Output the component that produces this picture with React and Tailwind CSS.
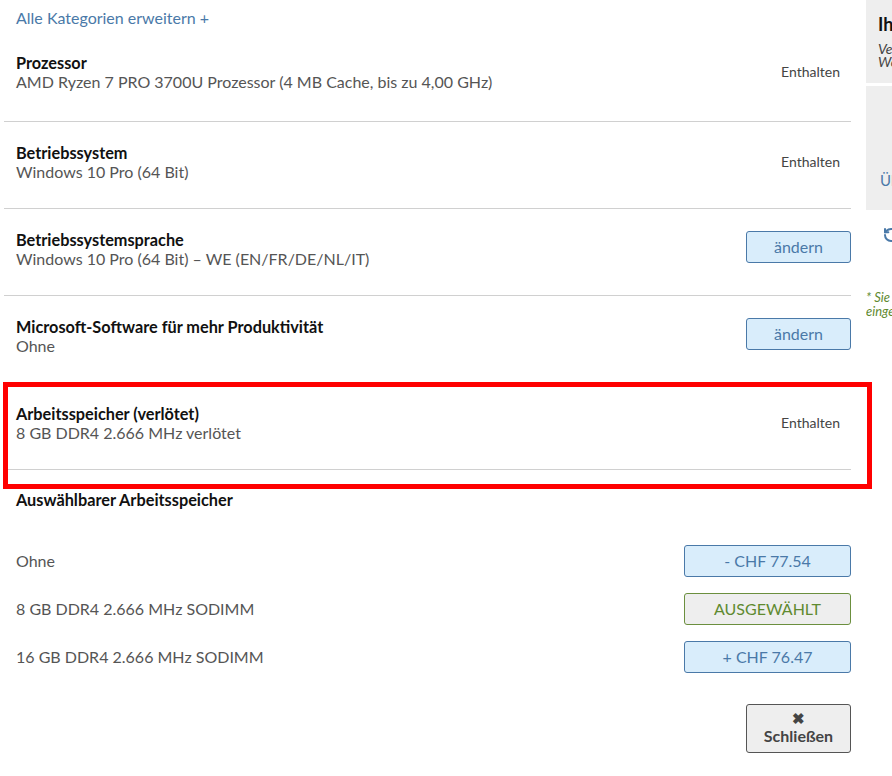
import { RotateCcw } from "lucide-react";

const rows = [
    { title: "Prozessor", sub: "AMD Ryzen 7 PRO 3700U Prozessor (4 MB Cache, bis zu 4,00 GHz)", action: "included", first: true },
    { title: "Betriebssystem", sub: "Windows 10 Pro (64 Bit)", action: "included" },
    { title: "Betriebssystemsprache", sub: "Windows 10 Pro (64 Bit) – WE (EN/FR/DE/NL/IT)", action: "change" },
    { title: "Microsoft-Software für mehr Produktivität", sub: "Ohne", action: "change" },
];

const memory = [
    { label: "Ohne", price: "- CHF 77.54" },
    { label: "8 GB DDR4 2.666 MHz SODIMM", selected: true },
    { label: "16 GB DDR4 2.666 MHz SODIMM", price: "+ CHF 76.47" },
];

function Row({ title, sub, action, first }) {
    return (
        <div className={`${first ? "h-[90px]" : "h-[87px]"} border-b border-[#d0d0d0] px-3 pt-[21px] flex justify-between`}>
            <div>
                <div className="text-[16.3px] leading-[20px] font-bold text-[#111]">{title}</div>
                <div className="text-[16px] leading-[20px] text-[#555] mt-[-1px]">{sub}</div>
            </div>
            {action === "included" ? (
                <div className="text-[14px] leading-[18px] text-[#444] mt-[10px] mr-[-1px]">Enthalten</div>
            ) : (
                <button className="h-[32px] w-[105px] mr-[-12px] mt-[1px] bg-[#d9edfb] border border-[#4a79a8] rounded-[3px] text-[16px] text-[#4a79a8]">
                    ändern
                </button>
            )}
        </div>
    );
}

export default function App() {
    return (
        <div className="w-[892px] h-[776px] overflow-hidden bg-white flex" style={{ fontFamily: "Lato, 'Open Sans', sans-serif" }}>
            {/* Main column */}
            <div className="w-[847px] ml-[4px] shrink-0">
                <div className="px-3 pt-[8px] h-[32px] text-[16px] leading-[20px] text-[#4a79a8]">Alle Kategorien erweitern +</div>

                {rows.map((r) => (
                    <Row key={r.title} {...r} />
                ))}

                {/* highlighted row */}
                <div className="relative pb-[19px]">
                    <Row title="Arbeitsspeicher (verlötet)" sub="8 GB DDR4 2.666 MHz verlötet" action="included" />
                    <div className="absolute left-[-1px] right-[-21px] top-[-1px] bottom-0 border-[5px] border-[#ff0000] pointer-events-none" />
                </div>

                <div className="px-3 pt-[1px] text-[16.3px] leading-[20px] font-bold text-[#111]">Auswählbarer Arbeitsspeicher</div>

                <div className="mt-[35px] flex flex-col gap-[16px]">
                    {memory.map((m) => (
                        <div key={m.label} className="flex items-center justify-between pl-3">
                            <span className="text-[16px] text-[#555]">{m.label}</span>
                            {m.selected ? (
                                <button className="h-[32px] w-[167px] bg-[#eeeeee] border border-[#6b8f3e] rounded-[3px] text-[16px] text-[#5f8a30]">
                                    AUSGEWÄHLT
                                </button>
                            ) : (
                                <button className="h-[32px] w-[167px] bg-[#d9edfb] border border-[#4a79a8] rounded-[3px] text-[16px] text-[#4a79a8]">
                                    {m.price}
                                </button>
                            )}
                        </div>
                    ))}
                </div>

                <div className="flex justify-end mt-[31px]">
                    <button className="h-[49px] w-[105px] bg-[#eeeeee] border border-[#555] rounded-[3px] flex flex-col items-center justify-center text-[#444]">
                        <span className="text-[15px] leading-[15px] font-bold">✖</span>
                        <span className="text-[16px] leading-[20px] font-bold">Schließen</span>
                    </button>
                </div>
            </div>

            {/* Right summary panel (cut off) */}
            <div className="ml-[15px] flex-1 overflow-hidden whitespace-nowrap">
                <div className="h-[83px] bg-[#eeeeee] pl-3 pt-[12px]">
                    <div className="text-[18px] leading-[24px] font-bold text-[#111]">Ihre Konfiguration</div>
                    <div className="mt-[6px] text-[14px] leading-[13px] italic text-[#444]">Versandkosten inklusive</div>
                    <div className="text-[14px] leading-[13px] italic text-[#444]">Werktage Lieferzeit</div>
                </div>
                <div className="h-[124px] mt-[3px] bg-[#eeeeee] pl-[14px] pt-[85px]">
                    <div className="text-[15px] leading-[18px] text-[#4a79a8]">Übersicht</div>
                </div>
                <div className="pl-[17px] mt-[17px] text-[#4a79a8]">
                    <RotateCcw size={16} strokeWidth={3} />
                </div>
                <div className="mt-[47px] text-[13px] leading-[14px] italic text-[#5f8a30]">
                    <div>* Sie erhalten</div>
                    <div>eingeschränkt</div>
                </div>
            </div>
        </div>
    );
}
